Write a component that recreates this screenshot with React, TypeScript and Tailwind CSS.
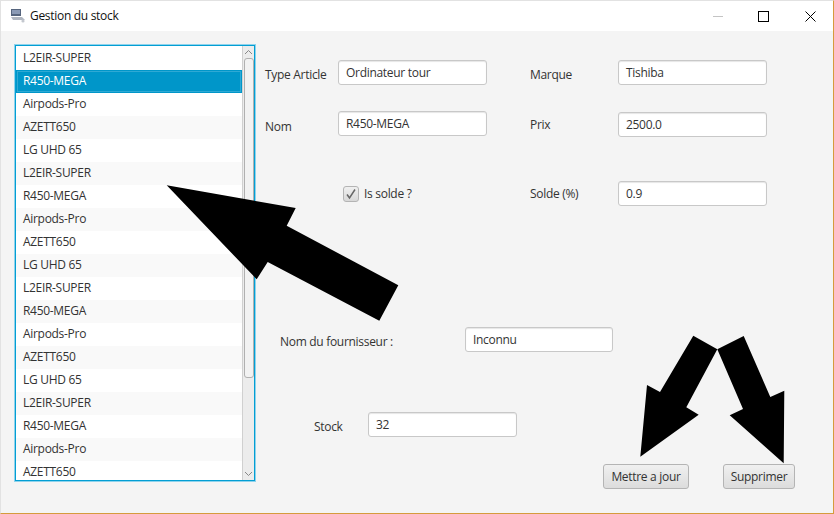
const items = ["L2EIR-SUPER","R450-MEGA","Airpods-Pro","AZETT650","LG UHD 65","L2EIR-SUPER","R450-MEGA","Airpods-Pro","AZETT650","LG UHD 65","L2EIR-SUPER","R450-MEGA","Airpods-Pro","AZETT650","LG UHD 65","L2EIR-SUPER","R450-MEGA","Airpods-Pro","AZETT650"];

function Field({ value, className = "w-[149px]" }: { value: string; className?: string }) {
  return (
    <div className={"h-[25px] shrink-0 rounded-[3px] border border-[#c8c8c8] bg-white pl-[7px] text-[12px] leading-[24px] text-[#333] shadow-[inset_0_1px_1px_#e6e6e6] " + className}>
      {value}
    </div>
  );
}

function Btn({ label, className = "" }: { label: string; className?: string }) {
  return (
    <div className={"flex h-[25px] items-center justify-center rounded-[3px] border border-[#b4b4b4] bg-gradient-to-b from-[#f0f0f0] to-[#dcdcdc] text-[12px] text-[#333] " + className}>
      {label}
    </div>
  );
}

export default function App() {
  return (
    <div className="relative h-[514px] w-[834px] overflow-hidden border-t border-r border-b border-l border-t-[#e2e2e2] border-l-[#e2e2e2] border-r-[#d59b3c] border-b-[#d59b3c] bg-[#f4f4f4] font-['Open_Sans','Noto_Sans',sans-serif] tracking-[-0.3px]">
      <div className="flex h-[30px] items-center bg-white pl-[9px]">
        <svg width="16" height="16" viewBox="0 0 16 16">
          <rect x="1" y="1" width="10" height="7" fill="#56657e" />
          <rect x="2" y="2" width="8" height="4" fill="#8b9ab5" />
          <path d="M1 9h11l3 3H3z" fill="#b0b6c0" />
          <circle cx="13" cy="13" r="1.6" fill="#c4c8cf" />
        </svg>
        <span className="ml-[4px] text-[12px] text-[#111]">Gestion du stock</span>
        <div className="ml-auto flex items-center">
          <div className="h-px w-[10px] bg-[#c4c4c4]" />
          <div className="ml-[35px] h-[11px] w-[11px] border border-black" />
          <svg className="ml-[36px] mr-[17px]" width="11" height="11" viewBox="0 0 11 11">
            <path d="M0.5 0.5l10 10M10.5 0.5l-10 10" stroke="#000" strokeWidth="1" fill="none" />
          </svg>
        </div>
      </div>

      <div className="flex pt-[14px] pl-[14px]">
        <div className="flex h-[436px] w-[240px] shrink-0 border border-[#039ed3] shadow-[0_0_0_1px_#8fd3ec]">
          <div className="min-w-0 flex-1 overflow-hidden bg-white pt-px">
            {items.map((t, i) => (
              <div
                key={i}
                className={
                  "h-[23px] pl-[7px] text-[12px] leading-[21px] " +
                  (i === 1
                    ? "bg-[#0096c9] text-white shadow-[inset_0_0_0_1px_#0096c9,inset_0_0_0_2px_#2fa9d4]"
                    : i % 2 === 1
                    ? "bg-[#f9f9f9] text-[#333]"
                    : "bg-white text-[#333]")
                }
              >
                {t}
              </div>
            ))}
          </div>
          <div className="flex w-[12px] shrink-0 flex-col items-center border-l border-[#d0d0d0] bg-[#ececec]">
            <svg className="mt-[3px] shrink-0" width="9" height="6" viewBox="0 0 9 6">
              <path d="M1 5l3.5-3.5L8 5" stroke="#888" fill="none" />
            </svg>
            <div className="mt-[3px] h-[320px] w-[10px] shrink-0 rounded-[3px] border border-[#b0b0b0] bg-[#f2f2f2]" />
            <svg className="mb-[3px] mt-auto shrink-0" width="9" height="6" viewBox="0 0 9 6">
              <path d="M1 1l3.5 3.5L8 1" stroke="#888" fill="none" />
            </svg>
          </div>
        </div>

        <div className="flex flex-col pl-[10px] pt-[15px] text-[12px] text-[#333]">
          <div className="flex">
            <span className="w-[73px] pt-[6px]">Type Article</span>
            <Field value="Ordinateur tour" />
            <span className="ml-[43px] w-[88px] pt-[6px]">Marque</span>
            <Field value="Tishiba" />
          </div>
          <div className="mt-[26px] flex">
            <span className="w-[73px] pt-[7px]">Nom</span>
            <Field value="R450-MEGA" />
            <span className="ml-[43px] w-[88px] pt-[5px]">Prix</span>
            <Field value="2500.0" className="mt-px w-[149px]" />
          </div>
          <div className="mt-[44px] flex items-center">
            <div className="ml-[78px] flex h-[16px] w-[16px] items-center justify-center rounded-[3px] border border-[#b4b4b4] bg-gradient-to-b from-[#f0f0f0] to-[#d8d8d8]">
              <svg width="12" height="12" viewBox="0 0 12 12">
                <path d="M2 6.5l2.5 3.5L10 1.5" stroke="#666" strokeWidth="1.5" fill="none" />
              </svg>
            </div>
            <span className="ml-[5px] w-[166px]">Is solde ?</span>
            <span className="w-[88px]">Solde (%)</span>
            <Field value="0.9" />
          </div>
          <div className="mt-[121px] flex items-center">
            <span className="ml-[15px] w-[185px] pt-[4px]">Nom du fournisseur :</span>
            <Field value="Inconnu" className="w-[148px]" />
          </div>
          <div className="mt-[60px] flex items-center">
            <span className="ml-[49px] w-[54px] pt-[4px]">Stock</span>
            <Field value="32" />
          </div>
          <div className="mt-[27px] flex">
            <Btn label="Mettre a jour" className="ml-[338px] w-[86px]" />
            <Btn label="Supprimer" className="ml-[34px] w-[72px]" />
          </div>
        </div>
      </div>

      <svg className="pointer-events-none absolute left-[-1px] top-[-1px]" width="834" height="514" viewBox="0 0 834 514">
        <polygon points="166.7,185.3 295.7,208 286.7,225.7 398.3,285.3 379.3,320.7 267.7,262 256.7,279.3" fill="#000" />
        <polygon points="693.3,335.7 717.3,349.3 686.3,407.3 698.7,414.7 640.3,456.7 647,385 660,392" fill="#000" />
        <polygon points="717.3,349.3 743.7,336 770.3,397 784.3,390.7 783.7,463.3 729.7,415.3 743,409" fill="#000" />
      </svg>
    </div>
  );
}
